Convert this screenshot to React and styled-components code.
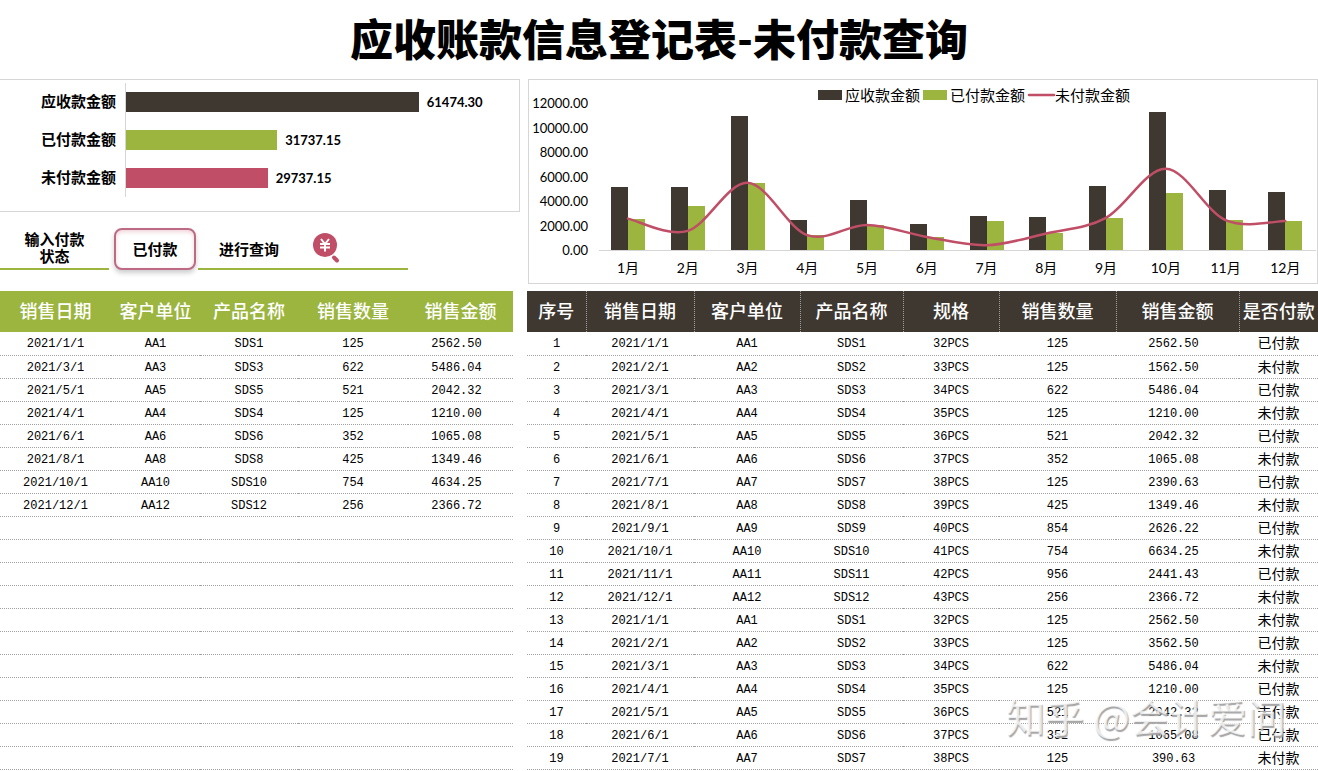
import React, { useState } from "react";
import styled, { createGlobalStyle } from "styled-components";

const colors = {
    dark: "#3e3831",
    green: "#9bb53f",
    red: "#c04e66",
    border: "#d6d6d6",
    dots: "#a0a0a0",
};

const sans = `Lato, "Noto Sans CJK SC", sans-serif`;
const mono = `"Liberation Mono", "Noto Sans CJK SC", monospace`;

const GlobalStyle = createGlobalStyle`
    * {
        box-sizing: border-box;
    }

    body {
        margin: 0;
        background: #fff;
        color: #000;
        font-family: ${sans};
    }
`;

const Page = styled.main`
    display: flex;
    flex-direction: column;
`;

const Title = styled.h1`
    margin: 0;
    font-size: 43px;
    font-weight: 900;
    line-height: 79px;
    text-align: center;
`;

const Overview = styled.div`
    display: grid;
    grid-template-columns: 520fr 790fr;
    gap: 8px;
    margin-bottom: 7px;
`;

const Side = styled.div`
    display: flex;
    flex-direction: column;
    gap: 16px;
`;

const Panel = styled.section`
    border: 1px solid ${colors.border};
    border-left-width: ${({ $flush }) => ($flush ? 0 : "1px")};
`;

const Totals = styled.dl`
    display: flex;
    flex-direction: column;
    margin: 3px 0 14px;
`;

const TotalRow = styled.div`
    display: grid;
    grid-template-columns: 116px 1fr;
    gap: 9px;
    align-items: center;
    height: 38px;
    font-weight: 700;

    & dt {
        font-size: 15px;
        line-height: 18px;
        padding-bottom: 2px;
        text-align: right;
    }

    & dd {
        display: flex;
        align-items: center;
        gap: 8px;
        height: 100%;
        margin: 0;
        border-left: 1px solid ${colors.border};
        font-size: 13px;
    }
`;

const TotalBar = styled.span`
    height: 20px;
    background: ${({ $color }) => $color};
`;

const Query = styled.form`
    display: flex;
    align-items: center;
    width: 408px;
    height: 42px;
    background: linear-gradient(${colors.green}, ${colors.green}) bottom / 100% 2px no-repeat;
    font-size: 15px;
    font-weight: 700;
`;

const QueryLabel = styled.label`
    width: 109px;
    padding: 0 24px 2px;
    line-height: 17px;
    text-align: center;
    word-break: break-all;
`;

const StatusBox = styled.div`
    padding: 0 2px 0 5px;
    background: #fff;
`;

const Status = styled.select`
    display: block;
    width: 82px;
    height: 42px;
    padding: 0;
    appearance: none;
    border: 2px solid #bd6a84;
    border-radius: 8px;
    background: #fff;
    box-shadow: 0 3px 5px rgba(0, 0, 0, 0.2), inset 0 2px 4px rgba(192, 78, 102, 0.25);
    color: #000;
    font: inherit;
    text-align: center;
    text-align-last: center;
`;

const SearchButton = styled.button`
    display: flex;
    align-items: center;
    gap: 32px;
    padding: 0 0 2px 21px;
    border: none;
    background: none;
    color: #000;
    font: inherit;
    cursor: pointer;
`;

const Chart = styled.svg`
    display: block;
    width: 100%;
    font-family: ${sans};
`;

const Tables = styled.div`
    display: grid;
    grid-template-columns: 513fr 791fr;
    gap: 14px;
`;

const TableWrap = styled.div`
    position: relative;
`;

const Table = styled.table`
    width: 100%;
    table-layout: fixed;
    border-collapse: collapse;
    font-family: ${mono};
`;

const HeadCell = styled.th`
    height: 41px;
    padding: 2px 0 0;
    background: ${({ $color }) => $color};
    border-right: ${({ $lines }) => ($lines ? `1px dotted ${colors.dots}` : "none")};
    color: #fff;
    font-size: 18px;
    font-weight: 500;
    line-height: 24px;
    white-space: nowrap;

    &:last-child {
        border-right: none;
    }
`;

const BodyRow = styled.tr`
    height: 23px;
    border-bottom: 1px dotted ${colors.dots};
`;

const Cell = styled.td`
    padding: 2px ${({ $amount }) => ($amount ? "8px" : 0)} 0 0;
    font-size: ${({ $chinese }) => ($chinese ? "14px" : "12px")};
    line-height: 20px;
    text-align: center;
    white-space: nowrap;
`;

const Watermark = styled.div`
    position: absolute;
    right: 32px;
    bottom: 35px;
    color: rgba(255, 255, 255, 0.75);
    font-family: "Noto Sans CJK SC", sans-serif;
    font-size: 39px;
    font-weight: 400;
    line-height: 40px;
    text-shadow: 1px 2px 1px #a6a6a6;
    white-space: nowrap;
    pointer-events: none;
`;

const totals = [
    { name: "应收款金额", value: 61474.3, color: colors.dark },
    { name: "已付款金额", value: 31737.15, color: colors.green },
    { name: "未付款金额", value: 29737.15, color: colors.red },
];

const months = [
    { paid: 2562.5, unpaid: 2562.5 },
    { paid: 3562.5, unpaid: 1562.5 },
    { paid: 5486.04, unpaid: 5486.04 },
    { paid: 1210, unpaid: 1210 },
    { paid: 2042.32, unpaid: 2042.32 },
    { paid: 1065.08, unpaid: 1065.08 },
    { paid: 2390.63, unpaid: 390.63 },
    { paid: 1349.46, unpaid: 1349.46 },
    { paid: 2626.22, unpaid: 2626.22 },
    { paid: 4634.25, unpaid: 6634.25 },
    { paid: 2441.43, unpaid: 2441.43 },
    { paid: 2366.72, unpaid: 2366.72 },
];

const queryColumns = [
    { key: "date", title: "销售日期", width: 111 },
    { key: "client", title: "客户单位", width: 89 },
    { key: "product", title: "产品名称", width: 98 },
    { key: "count", title: "销售数量", width: 110 },
    { key: "amount", title: "销售金额", width: 105 },
];

const recordColumns = [
    { key: "id", title: "序号", width: 59 },
    { key: "date", title: "销售日期", width: 108 },
    { key: "client", title: "客户单位", width: 106 },
    { key: "product", title: "产品名称", width: 103 },
    { key: "size", title: "规格", width: 96 },
    { key: "count", title: "销售数量", width: 117 },
    { key: "amount", title: "销售金额", width: 123 },
    { key: "status", title: "是否付款", width: 79 },
];

const PAID = "已付款";
const UNPAID = "未付款";

// month, quantity, amount, status
const records = [
    [1, 125, "2562.50", PAID],
    [2, 125, "1562.50", UNPAID],
    [3, 622, "5486.04", PAID],
    [4, 125, "1210.00", UNPAID],
    [5, 521, "2042.32", PAID],
    [6, 352, "1065.08", UNPAID],
    [7, 125, "2390.63", PAID],
    [8, 425, "1349.46", UNPAID],
    [9, 854, "2626.22", PAID],
    [10, 754, "6634.25", UNPAID],
    [11, 956, "2441.43", PAID],
    [12, 256, "2366.72", UNPAID],
    [1, 125, "2562.50", UNPAID],
    [2, 125, "3562.50", PAID],
    [3, 622, "5486.04", UNPAID],
    [4, 125, "1210.00", PAID],
    [5, 521, "2042.32", UNPAID],
    [6, 352, "1065.08", PAID],
    [7, 125, "390.63", UNPAID],
].map(([month, count, amount, status], index) => ({
    id: index + 1,
    date: `2021/${month}/1`,
    client: `AA${month}`,
    product: `SDS${month}`,
    size: `${31 + month}PCS`,
    count,
    amount,
    status,
}));

const results = [
    [1, 125, "2562.50"],
    [3, 622, "5486.04"],
    [5, 521, "2042.32"],
    [4, 125, "1210.00"],
    [6, 352, "1065.08"],
    [8, 425, "1349.46"],
    [10, 754, "4634.25"],
    [12, 256, "2366.72"],
].map(([month, count, amount]) => ({
    date: `2021/${month}/1`,
    client: `AA${month}`,
    product: `SDS${month}`,
    count,
    amount,
}));

const emptyRows = Array.from({ length: records.length - results.length }, () => ({}));

const BASE = 170;
const STEP = 59.75;
const toX = (index) => 100 + index * STEP;
const toY = (value) => BASE - value * 0.01225;

function smoothPath(points) {
    return points.slice(1).reduce((path, point, i) => {
        const start = points[i];
        const before = points[i - 1] || start;
        const after = points[i + 2] || point;
        const c1 = [start[0] + (point[0] - before[0]) / 6, start[1] + (point[1] - before[1]) / 6];
        const c2 = [point[0] - (after[0] - start[0]) / 6, point[1] - (after[1] - start[1]) / 6];
        return `${path} C${c1} ${c2} ${point}`;
    }, `M${points[0]}`);
}

function MonthChart() {
    return (
        <Chart viewBox="0 0 788 203" role="img" aria-label="每月金额">
            <g fontSize="13" textAnchor="end">
                {[0, 2000, 4000, 6000, 8000, 10000, 12000].map((value) => (
                    <text key={value} x="59" y={toY(value) + 5}>
                        {value.toFixed(2)}
                    </text>
                ))}
            </g>
            <path d={`M70 ${BASE + 0.5}H787`} stroke={colors.border} />
            {months.map(({ paid, unpaid }, i) => (
                <g key={i} shapeRendering="crispEdges">
                    <rect
                        x={toX(i) - 18}
                        y={toY(paid + unpaid)}
                        width="17"
                        height={BASE - toY(paid + unpaid)}
                        fill={colors.dark}
                    />
                    <rect
                        x={toX(i) - 1}
                        y={toY(paid)}
                        width="17"
                        height={BASE - toY(paid)}
                        fill={colors.green}
                    />
                    <text x={toX(i) - 1} y="193" fontSize="14" textAnchor="middle">
                        {i + 1}月
                    </text>
                </g>
            ))}
            <path
                d={smoothPath(months.map(({ unpaid }, i) => [toX(i) - 1, toY(unpaid)]))}
                fill="none"
                stroke={colors.red}
                strokeWidth="2.5"
                strokeLinecap="round"
            />
            <g fontSize="15">
                <rect x="289" y="10" width="24" height="10" fill={colors.dark} />
                <text x="316" y="21">应收款金额</text>
                <rect x="394" y="10" width="24" height="10" fill={colors.green} />
                <text x="421" y="21">已付款金额</text>
                <path d="M500 15H525" stroke={colors.red} strokeWidth="2.5" strokeLinecap="round" />
                <text x="526" y="21">未付款金额</text>
            </g>
        </Chart>
    );
}

function SearchIcon() {
    return (
        <svg width="30" height="34" viewBox="0 0 30 34" aria-hidden="true">
            <circle cx="14" cy="14" r="12" fill={colors.red} />
            <path d="M23 26.500l3 3" stroke={colors.red} strokeWidth="4" strokeLinecap="round" />
            <path
                d="M10 8l4 5L18 8M9 13h10M9 16.500h10M14 13v7.500"
                fill="none"
                stroke="#fff"
                strokeWidth="2"
            />
        </svg>
    );
}

function DataTable({ columns, rows, color, lines }) {
    const total = columns.reduce((sum, { width }) => sum + width, 0);

    return (
        <Table>
            <colgroup>
                {columns.map(({ key, width }) => (
                    <col key={key} style={{ width: `${(width / total) * 100}%` }} />
                ))}
            </colgroup>
            <thead>
                <tr>
                    {columns.map(({ key, title }) => (
                        <HeadCell key={key} $color={color} $lines={lines}>
                            {title}
                        </HeadCell>
                    ))}
                </tr>
            </thead>
            <tbody>
                {rows.map((row, i) => (
                    <BodyRow key={i}>
                        {columns.map(({ key }) => (
                            <Cell key={key} $amount={key === "amount"} $chinese={key === "status"}>
                                {row[key]}
                            </Cell>
                        ))}
                    </BodyRow>
                ))}
            </tbody>
        </Table>
    );
}

export default function App() {
    const [status, setStatus] = useState(PAID);

    return (
        <Page>
            <GlobalStyle />
            <Title>应收账款信息登记表-未付款查询</Title>
            <Overview>
                <Side>
                    <Panel $flush>
                        <Totals>
                            {totals.map(({ name, value, color }) => (
                                <TotalRow key={name}>
                                    <dt>{name}</dt>
                                    <dd>
                                        <TotalBar
                                            $color={color}
                                            style={{ width: `${(value / 61474.3) * 74.5}%` }}
                                        />
                                        {value.toFixed(2)}
                                    </dd>
                                </TotalRow>
                            ))}
                        </Totals>
                    </Panel>
                    <Query onSubmit={(e) => e.preventDefault()}>
                        <QueryLabel htmlFor="status">输入付款状态</QueryLabel>
                        <StatusBox>
                            <Status
                                id="status"
                                value={status}
                                onChange={(e) => setStatus(e.target.value)}
                            >
                                <option>{PAID}</option>
                                <option>{UNPAID}</option>
                            </Status>
                        </StatusBox>
                        <SearchButton type="submit">
                            进行查询
                            <SearchIcon />
                        </SearchButton>
                    </Query>
                </Side>
                <Panel>
                    <MonthChart />
                </Panel>
            </Overview>
            <Tables>
                <DataTable
                    columns={queryColumns}
                    rows={[...results, ...emptyRows]}
                    color={colors.green}
                />
                <TableWrap>
                    <DataTable columns={recordColumns} rows={records} color={colors.dark} lines />
                    <Watermark>知乎 @会计爱问</Watermark>
                </TableWrap>
            </Tables>
        </Page>
    );
}
